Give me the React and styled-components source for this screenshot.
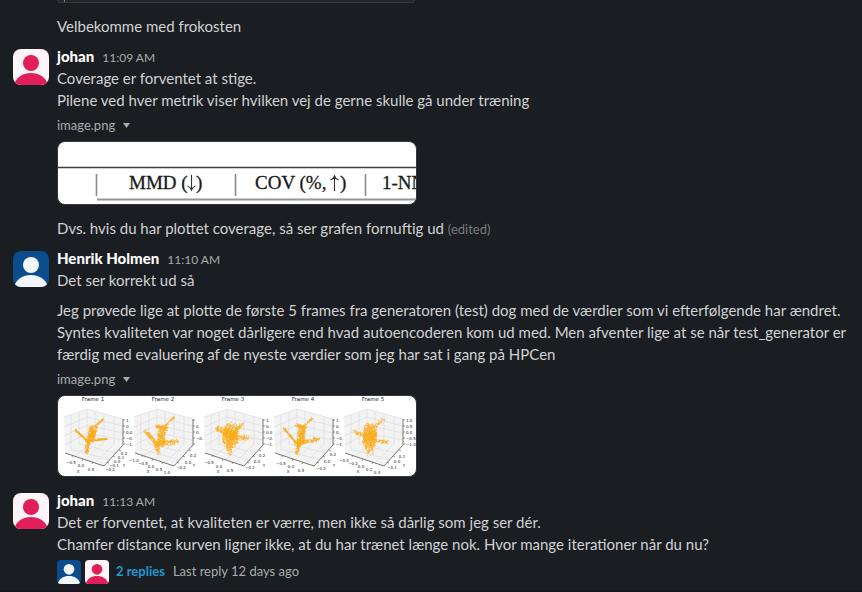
import React from "react";
import styled, { createGlobalStyle } from "styled-components";

const GlobalStyle = createGlobalStyle`
  *, *::before, *::after { box-sizing: border-box; }
  body {
    margin: 0;
    background: #1a1d21;
    color: #d1d2d3;
    font: 15px/22px Lato, "Noto Sans", sans-serif;
    overflow: hidden;
  }
`;

const Feed = styled.main`
  display: flex;
  flex-direction: column;
  min-height: 100vh;
  border-bottom: 2px solid #19171d;
`;

const Message = styled.article`
  display: grid;
  grid-template-columns: 36px minmax(0, 1fr);
  column-gap: 8px;
  padding: ${(p) => (p.$lead ? 0 : 4)}px 12px 4px 13px;
`;

const Body = styled.div`
  grid-column: 2;
  display: flex;
  flex-direction: column;
  align-items: flex-start;
  min-width: 0;
`;

const Header = styled.header`
  display: flex;
  align-items: baseline;
  gap: 8px;
  height: 22px;
`;

const Author = styled.strong`
  color: #ffffff;
  font-weight: 900;
`;

const Time = styled.time`
  color: #ababad;
  font-size: 12px;
  line-height: 16px;
`;

const Text = styled.p`
  margin: ${(p) => (p.$spaced ? "8px 0 0" : "0")};
`;

const Edited = styled.span`
  color: #797b7e;
  font-size: 13px;
  line-height: 16px;
`;

const FileButton = styled.button`
  display: flex;
  align-items: center;
  gap: 8px;
  height: 22px;
  margin: 3px 0 5px;
  padding: 0;
  border: 0;
  background: none;
  color: #ababad;
  font: 13px/22px Lato, "Noto Sans", sans-serif;
`;

const Picture = styled.figure`
  width: 360px;
  max-width: 100%;
  margin: 0 0 4px;
  border: 1px solid #35373b;
  border-radius: 8px;
  background: #ffffff;
  overflow: hidden;

  svg { display: block; margin: -1px; }
`;

const CodeTail = styled.div`
  width: 358px;
  max-width: 100%;
  height: 3px;
  margin-bottom: 4px;
  padding-left: 6px;
  border: 1px solid #35373b;
  border-top: 0;
  border-radius: 0 0 4px 4px;
  background: #222529;

  &::before {
    content: "";
    display: block;
    width: 1px;
    height: 2px;
    background: #5f9c6c;
  }
`;

const AvatarBox = styled.svg`
  display: block;
  width: ${(p) => p.$size}px;
  height: ${(p) => p.$size}px;
  margin-top: ${(p) => (p.$size > 30 ? 4 : 0)}px;
  border-radius: ${(p) => (p.$size > 30 ? 8 : 4)}px;
`;

const Thread = styled.div`
  display: flex;
  align-items: center;
  gap: 4px;
  padding-top: 5px;
  font-size: 13px;
  line-height: 22px;
`;

const Replies = styled.a`
  margin: 0 4px 2px 3px;
  color: #1d9bd1;
  font-weight: 700;
  text-decoration: none;
`;

const LastReply = styled.span`
  margin-bottom: 2px;
  color: #ababad;
`;

const people = {
  johan: { name: "johan", bg: "#fff4f7", fg: "#e01e5a" },
  henrik: { name: "Henrik Holmen", bg: "#0b4c8c", fg: "#f2f7fb" },
};

function Avatar({ who, size = 36 }) {
  const { bg, fg, name } = people[who];
  return (
    <AvatarBox $size={size} viewBox="0 0 36 36" role="img" aria-label={name}>
      <rect width="36" height="36" fill={bg} />
      <circle cx="18" cy="14" r="8" fill={fg} />
      <path d="M1 36C3 28 10 24 18 24s15 4 17 12z" fill={fg} />
    </AvatarBox>
  );
}

function Post({ who, time, children }) {
  return (
    <Message>
      <Avatar who={who} />
      <Body>
        <Header>
          <Author>{people[who].name}</Author>
          <Time>{time}</Time>
        </Header>
        {children}
      </Body>
    </Message>
  );
}

function FileName() {
  return (
    <FileButton type="button">
      image.png
      <svg width="7" height="5" viewBox="0 0 7 5" aria-hidden="true">
        <path d="M0 0h7L3.5 5z" fill="#ababad" />
      </svg>
    </FileButton>
  );
}

function MetricHeader() {
  return (
    <svg width="360" height="64" viewBox="0 0 360 64" role="img" aria-label="Metric columns">
      <path d="M0 26.5H360" stroke="#3f3f3f" strokeWidth="1.6" />
      <path d="M39.5 33V55M178.500 33V55M308.500 33V55" stroke="#8b8b8b" strokeWidth="1.6" />
      <path d="M40 58.500H360" stroke="#969696" strokeWidth="2" />
      <g fill="#191919" stroke="#191919" strokeWidth=".3" fontFamily="'Liberation Serif', serif" fontSize="19">
        <text x="72" y="48">MMD (</text>
        <text x="139" y="48">)</text>
        <text x="198" y="48">COV (%,</text>
        <text x="283" y="48">)</text>
        <text x="325" y="48">1-NN</text>
      </g>
      <path
        d="M134.500 34V49M130.500 45q3 1 4 4q1-3 4-4M277.500 50V35M273.500 39q3-1 4-4q1 3 4 4"
        fill="none" stroke="#333" strokeWidth="1.1"
      />
    </svg>
  );
}

/* Clouds are [x1, y1, x2, y2, spread, points] strokes, local to each frame. */
const frames = [
  {
    title: "Frame 1", x: 0,
    clouds: [[46, 24, 37, 32, 1, 50], [36, 32, 33, 46, 4, 300], [18, 35, 30, 46, 1, 90], [28, 46, 50, 44, 1, 130], [31, 46, 29, 58, 2, 90]],
    xt: [["-0.5", 14, 69], ["0.0", 24, 72], ["0.5", 34, 76]],
    yt: [["-0.2", 53, 76], ["-0.1", 57, 72], ["0.0", 60, 68], ["0.1", 64, 64], ["0.2", 67, 60]],
    zt: ["1.", "0.", "0.0", "-0.", "-1."],
  },
  {
    title: "Frame 2", x: 70,
    clouds: [[47, 22, 37, 32, 1, 45], [29, 31, 40, 34, 2, 100], [35, 34, 33, 49, 4, 260], [18, 36, 30, 50, 2, 130], [28, 50, 51, 46, 3, 160], [30, 50, 31, 58, 3, 60]],
    xt: [["-1.0", 7, 67], ["-0.5", 16, 70], ["0.0", 24, 73], ["0.5", 32, 76], ["1.0", 40, 79]],
    yt: [["-0.2", 54, 74], ["0.0", 61, 69], ["0.2", 66, 62]],
    zt: ["", "0.", "0.", "-0.", ""],
  },
  {
    title: "Frame 3", x: 140,
    clouds: [[33, 34, 33, 47, 8, 620], [20, 33, 31, 39, 3, 110], [45, 29, 36, 38, 2, 70], [32, 42, 51, 43, 3, 120], [32, 46, 32, 58, 3, 80]],
    xt: [["-0.5", 12, 69], ["0.0", 22, 73], ["0.5", 33, 77]],
    yt: [["-0.2", 53, 74], ["0.0", 60, 68], ["0.2", 65, 62]],
    zt: ["1.", "0.", "0.0", "-0.", "-1."],
  },
  {
    title: "Frame 4", x: 210,
    clouds: [[45, 23, 36, 32, 1, 45], [29, 30, 38, 33, 2, 90], [35, 33, 33, 48, 4, 270], [16, 33, 29, 48, 1, 110], [28, 49, 51, 44, 2, 160], [32, 48, 29, 59, 2, 90]],
    xt: [["-0.5", 14, 70], ["0.0", 24, 73], ["0.5", 34, 77]],
    yt: [["-0.2", 54, 75], ["0.0", 60, 68], ["0.2", 66, 61]],
    zt: ["1.", "0.", "0.", "-0.", "-1."],
  },
  {
    title: "Frame 5", x: 280,
    clouds: [[33, 34, 32, 49, 7, 640], [16, 37, 30, 41, 2, 60], [46, 24, 36, 33, 2, 50], [31, 45, 51, 47, 2, 80], [32, 48, 32, 59, 4, 70]],
    xt: [["-0.4", 7, 67], ["-0.2", 16, 70], ["0.0", 24, 73], ["0.2", 32, 76], ["0.4", 40, 79]],
    yt: [["-0.1", 55, 74], ["0.0", 60, 68], ["0.1", 65, 63]],
    zt: ["1.0", "0.5", "0.0", "-0.5", "-1.0"],
  },
];

function scatter(clouds, seed) {
  let s = seed;
  const rand = () => {
    s = (s * 16807) % 2147483647;
    return s / 2147483647;
  };
  let d = "";
  for (const [x1, y1, x2, y2, spread, count] of clouds) {
    for (let i = 0; i < count; i += 1) {
      const t = rand();
      const r = Math.sqrt(rand()) * spread;
      const a = rand() * Math.PI * 2;
      const x = x1 + (x2 - x1) * t + Math.cos(a) * r;
      const y = y1 + (y2 - y1) * t + Math.sin(a) * r;
      d += `M${x.toFixed(1)} ${y.toFixed(1)}h.8`;
    }
  }
  return d;
}

function Frame({ frame, seed }) {
  return (
    <g transform={`translate(${frame.x} 0)`}>
      <path d="M7 22L30 14V44L8 58zM30 14L66 24V50L30 44zM8 58L30 44L66 50L47 71z" fill="#f3f3f4" />
      <path
        d="M14 20V54L53 65M22 17V49L59 58M38 16V46L17 61M47 19V47L28 65M57 21V49L38 68M7 32L30 22L66 31M7 41L30 30L66 38M8 50L30 38L66 45M30 14V44M7 22L30 14L66 24"
        fill="none" stroke="#d9d9db" strokeWidth=".6"
      />
      <path d="M8 58L47 71L66 50V24" fill="none" stroke="#555" strokeWidth=".8" />
      <path d="M66 25h2M66 31h2M66 37h2M66 43h2M66 49h2M16 60l-1 2M26 64l-1 2M36 67l-1 2M50 67l2 1M56 61l2 1M62 55l2 1" stroke="#555" strokeWidth=".6" />
      <path d={scatter(frame.clouds, seed)} stroke="#fdac16" strokeWidth=".9" />
      <g fill="#222" fontFamily="'DejaVu Sans', sans-serif" fontSize="4" textAnchor="middle">
        <text x="36" y="6" fontSize="5.500">{frame.title}</text>
        {[...frame.xt, ...frame.yt].map(([label, x, y]) => (
          <text key={`${label}${x}`} x={x} y={y}>{label.replace("-", "−")}</text>
        ))}
        <text x="21" y="78">X</text>
        <text x="67" y="72">Y</text>
        {frame.zt.map((label, i) => (
          <text key={i} x="69" y={27 + i * 6} textAnchor="start">{label.replace("-", "−")}</text>
        ))}
      </g>
    </g>
  );
}

function FramePlots() {
  return (
    <svg width="360" height="82" viewBox="0 0 360 82" role="img" aria-label="Point clouds of five frames">
      {frames.map((frame, i) => (
        <Frame key={frame.title} frame={frame} seed={1337 + i * 911} />
      ))}
    </svg>
  );
}

export default function App() {
  return (
    <>
      <GlobalStyle />
      <Feed>
        <Message $lead>
          <Body>
            <CodeTail />
            <Text $spaced>Velbekomme med frokosten</Text>
          </Body>
        </Message>
        <Post who="johan" time="11:09 AM">
          <Text>
            Coverage er forventet at stige.
            <br />
            Pilene ved hver metrik viser hvilken vej de gerne skulle gå under træning
          </Text>
          <FileName />
          <Picture><MetricHeader /></Picture>
          <Text $spaced>
            Dvs. hvis du har plottet coverage, så ser grafen fornuftig ud <Edited>(edited)</Edited>
          </Text>
        </Post>
        <Post who="henrik" time="11:10 AM">
          <Text>Det ser korrekt ud så</Text>
          <Text $spaced>
            Jeg prøvede lige at plotte de første 5 frames fra generatoren (test) dog med de værdier som vi
            efterfølgende har ændret. Syntes kvaliteten var noget dårligere end hvad autoencoderen kom ud med.
            Men afventer lige at se når test_generator er færdig med evaluering af de nyeste værdier som jeg har
            sat i gang på HPCen
          </Text>
          <FileName />
          <Picture><FramePlots /></Picture>
        </Post>
        <Post who="johan" time="11:13 AM">
          <Text>
            Det er forventet, at kvaliteten er værre, men ikke så dårlig som jeg ser dér.
            <br />
            Chamfer distance kurven ligner ikke, at du har trænet længe nok. Hvor mange iterationer når du nu?
          </Text>
          <Thread>
            <Avatar who="henrik" size={24} />
            <Avatar who="johan" size={24} />
            <Replies href="#thread">2 replies</Replies>
            <LastReply>Last reply 12 days ago</LastReply>
          </Thread>
        </Post>
      </Feed>
    </>
  );
}
